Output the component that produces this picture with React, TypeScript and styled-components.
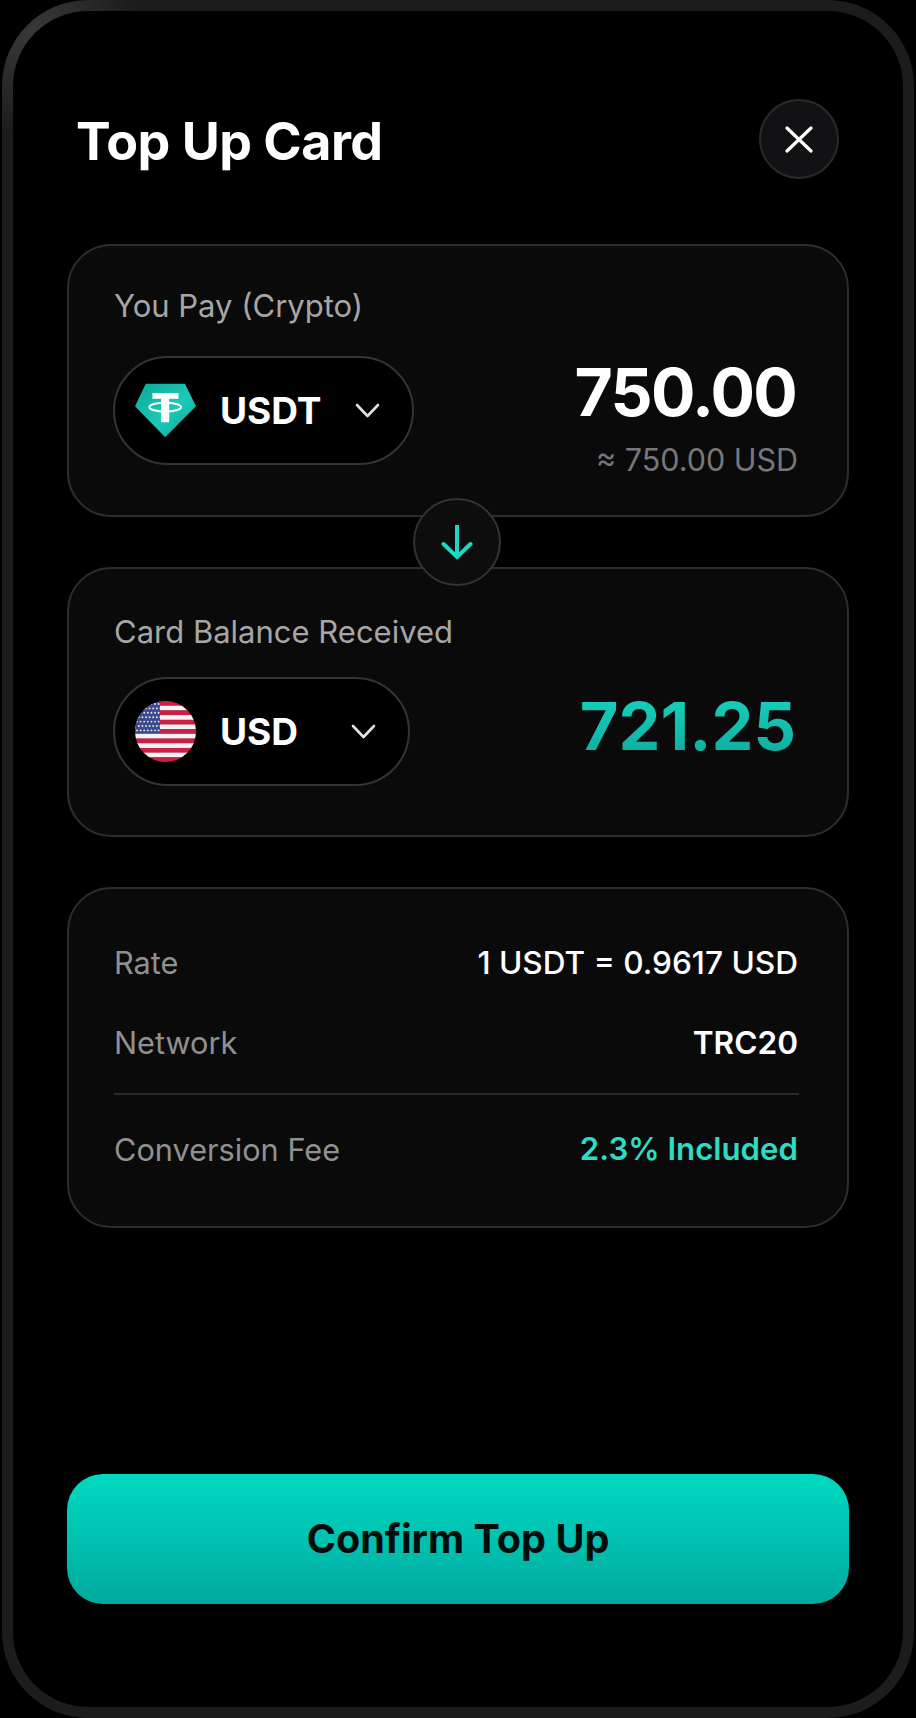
import React from "react";
import styled, { createGlobalStyle } from "styled-components";

const GlobalStyle = createGlobalStyle`
  html, body {
    margin: 0;
    padding: 0;
    background: #000;
  }
  * {
    box-sizing: border-box;
  }
`;

const Frame = styled.div`
  width: 912px;
  height: 1718px;
  margin: 0 2px;
  display: flex;
  flex-direction: column;
  padding: 88px 54px 103px;
  background:
    linear-gradient(#000, #000) padding-box,
    radial-gradient(circle at 36px 36px, #3a3a3a, #1c1c1d 100px) border-box;
  border: 11px solid transparent;
  border-radius: 86px;
  font-family: Inter, "Liberation Sans", sans-serif;
  color: #fff;
`;
const Header = styled.div`
  display: flex;
  align-items: center;
  justify-content: space-between;
  height: 80px;
  margin-bottom: 65px;
  padding: 0 10px 0 9px;
`;
const Title = styled.h1`
  margin: 4px 0 0;
  font-size: 52px;
  font-weight: 700;
  letter-spacing: -0.5px;
`;
const CloseButton = styled.button`
  display: flex;
  align-items: center;
  justify-content: center;
  width: 80px;
  height: 80px;
  padding: 0;
  background: #121214;
  border: 2px solid #2a2a2b;
  border-radius: 50%;
`;
const Card = styled.section<{ $height: number; $top: number }>`
  position: relative;
  height: ${(p) => p.$height}px;
  padding: ${(p) => p.$top}px 49px 0 45px;
  background: #0a0a0b;
  border: 2px solid #2d2d2e;
  border-radius: 44px;
  & + & {
    margin-top: 50px;
  }
`;
const Label = styled.div<{ $gap: number }>`
  margin-bottom: ${(p) => p.$gap}px;
  font-size: 31px;
  line-height: 36px;
  color: #a6a6a6;
`;
const Exchange = styled.div`
  display: flex;
  align-items: flex-start;
  justify-content: space-between;
`;
const Pill = styled.div<{ $width: number }>`
  display: flex;
  align-items: center;
  width: ${(p) => p.$width}px;
  height: 109px;
  margin-left: -1px;
  padding: 0 32px 0 20px;
  background: #000;
  border: 2px solid #343435;
  border-radius: 55px;
`;
const CoinCode = styled.span`
  margin-left: 24px;
  margin-right: auto;
  font-size: 37px;
  font-weight: 700;
  line-height: 44px;
`;
const Amounts = styled.div<{ $offset: number }>`
  display: flex;
  flex-direction: column;
  align-items: flex-end;
  margin-top: ${(p) => p.$offset}px;
`;
const Amount = styled.div`
  margin-right: 2px;
  font-size: 66px;
  font-weight: 700;
  line-height: 80px;
  letter-spacing: -1.7px;
`;
const ReceivedAmount = styled(Amount)`
  font-size: 66.6px;
  letter-spacing: 0;
  background: linear-gradient(180deg, #18d6c2, #0ca899);
  background-clip: text;
  -webkit-background-clip: text;
  color: transparent;
`;
const Approx = styled.div`
  margin-top: 10px;
  font-size: 30.5px;
  line-height: 36px;
  color: #77777a;
`;
const SwapBadge = styled.div`
  position: absolute;
  left: 344px;
  bottom: -71px;
  z-index: 2;
  display: flex;
  align-items: center;
  justify-content: center;
  width: 88px;
  height: 88px;
  background: #0d0d0e;
  border: 2px solid #333334;
  border-radius: 50%;
`;
const DetailRow = styled.div`
  display: flex;
  justify-content: space-between;
  align-items: center;
  height: 36px;
  & + & {
    margin-top: 44px;
  }
`;
const DetailLabel = styled.span`
  font-size: 30.7px;
  color: #909091;
`;
const DetailValue = styled.span<{ $accent?: boolean; $strong?: boolean }>`
  font-size: ${(p) => (p.$accent ? 31.2 : 31.6)}px;
  font-weight: ${(p) => (p.$accent || p.$strong ? 600 : 500)};
  color: ${(p) => (p.$accent ? "#2edcc4" : "#fff")};
`;
const Divider = styled.hr`
  height: 2px;
  margin: 33px -1px 36px 0;
  background: #2a2a2b;
  border: 0;
`;
const ConfirmButton = styled.button`
  width: 100%;
  height: 130px;
  margin-top: auto;
  background: linear-gradient(180deg, #00dac2, #00a99d);
  border: 0;
  border-radius: 36px;
  font-family: inherit;
  font-size: 39.6px;
  font-weight: 700;
  color: #010d0b;
`;
const CoinIcon = styled.svg`
  flex: none;
  width: 61px;
  height: 61px;
`;

const CloseIcon = () => (
  <svg width="28" height="27" viewBox="0 0 28 27" fill="none" stroke="#fff" strokeWidth="3.2" strokeLinecap="round">
    <path d="M2 2l24 23M26 2L2 25" />
  </svg>
);

const Chevron = () => (
  <svg width="25" height="15" viewBox="0 0 25 15" fill="none" stroke="#e2e2e2" strokeWidth="2.6" strokeLinecap="round" strokeLinejoin="round">
    <path d="M2 2l10.5 11L23 2" />
  </svg>
);

const ArrowDownIcon = () => (
  <svg width="32" height="36" viewBox="0 0 32 36" fill="none" stroke="#1bd8c4" strokeWidth="4">
    <path d="M16 1v31" />
    <path d="M2.5 20L16 33l13.500-13" strokeLinecap="round" />
  </svg>
);

const TetherIcon = () => (
  <CoinIcon viewBox="0 0 182 182">
    <defs>
      <linearGradient id="tether" x1="0" y1="0" x2="1" y2="1">
        <stop offset="0" stopColor="#0aa899" />
        <stop offset="0.55" stopColor="#1cc9b6" />
        <stop offset="1" stopColor="#0aa597" />
      </linearGradient>
    </defs>
    <path d="M32 11h117l33 67-92 93L0 78z" fill="url(#tether)" />
    <g fill="#fff">
      <rect x="52" y="39" width="78" height="17" />
      <rect x="78" y="39" width="24" height="87" />
    </g>
    <ellipse cx="90" cy="81" rx="47" ry="13" fill="none" stroke="#fff" strokeWidth="6" />
  </CoinIcon>
);

const STRIPES = [0, 1, 2, 3, 4, 5, 6, 7, 8, 9, 10, 11, 12];
const STAR_ROWS = [0, 1, 2, 3, 4, 5, 6];
const STAR_COLS = [0, 1, 2, 3, 4, 5, 6];

const FlagIcon = () => (
  <CoinIcon viewBox="0 0 61 61">
    <defs>
      <clipPath id="flagCircle">
        <circle cx="30.5" cy="30.5" r="30.5" />
      </clipPath>
    </defs>
    <g clipPath="url(#flagCircle)">
      {STRIPES.map((i) => (
        <rect key={i} x="0" y={(i * 61) / 13} width="61" height={61 / 13 + 0.2} fill={i % 2 ? "#f6f2f3" : "#cc1f48"} />
      ))}
      <rect x="0" y="0" width="25" height="32" fill="#3a4a8c" />
      {STAR_ROWS.map((r) =>
        STAR_COLS.map((c) => (
          <circle key={`${r}-${c}`} cx={2 + c * 3.6 + (r % 2) * 1.8} cy={3 + r * 4.4} r="0.95" fill="#e6e8f2" />
        ))
      )}
    </g>
  </CoinIcon>
);

const App = () => {
  return (
    <>
      <GlobalStyle />
      <Frame>
        <Header>
          <Title>Top Up Card</Title>
          <CloseButton aria-label="Close">
            <CloseIcon />
          </CloseButton>
        </Header>

        <Card $height={273} $top={42}>
          <Label $gap={32}>You Pay (Crypto)</Label>
          <Exchange>
            <Pill $width={301}>
              <TetherIcon />
              <CoinCode>USDT</CoinCode>
              <Chevron />
            </Pill>
            <Amounts $offset={-4}>
              <Amount>750.00</Amount>
              <Approx>≈ 750.00 USD</Approx>
            </Amounts>
          </Exchange>
          <SwapBadge>
            <ArrowDownIcon />
          </SwapBadge>
        </Card>

        <Card $height={270} $top={45}>
          <Label $gap={27}>Card Balance Received</Label>
          <Exchange>
            <Pill $width={297}>
              <FlagIcon />
              <CoinCode>USD</CoinCode>
              <Chevron />
            </Pill>
            <Amounts $offset={9}>
              <ReceivedAmount>721.25</ReceivedAmount>
            </Amounts>
          </Exchange>
        </Card>

        <Card $height={341} $top={55}>
          <DetailRow>
            <DetailLabel>Rate</DetailLabel>
            <DetailValue>1 USDT = 0.9617 USD</DetailValue>
          </DetailRow>
          <DetailRow>
            <DetailLabel>Network</DetailLabel>
            <DetailValue $strong>TRC20</DetailValue>
          </DetailRow>
          <Divider />
          <DetailRow>
            <DetailLabel>Conversion Fee</DetailLabel>
            <DetailValue $accent>2.3% Included</DetailValue>
          </DetailRow>
        </Card>

        <ConfirmButton>Confirm Top Up</ConfirmButton>
      </Frame>
    </>
  );
};

export default App;
